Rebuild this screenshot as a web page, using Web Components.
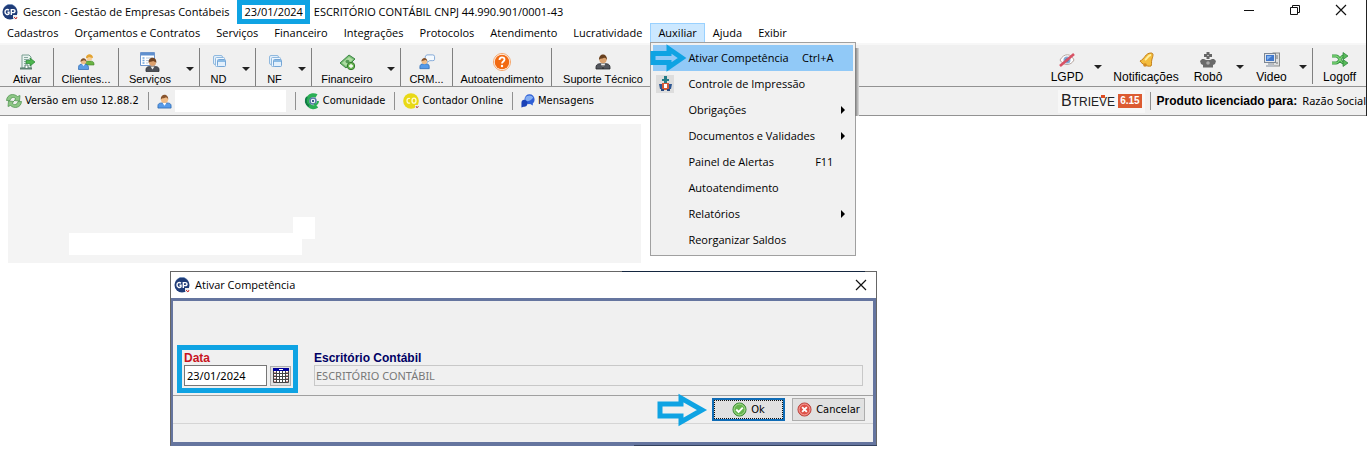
<!DOCTYPE html>
<html lang="pt-BR">
<head>
<meta charset="utf-8">
<title>Gescon - Gestão de Empresas Contábeis</title>
<style>
  body {
    margin: 0;
    background: #fff;
    color: #000;
    font: 11px/16px "Open Sans", "Noto Sans", sans-serif;
    overflow: hidden;
    --small: 11px/16px "DejaVu Sans Condensed", "DejaVu Sans", sans-serif;
  }
</style>
</head>
<body>
<gescon-app></gescon-app>

<script>
const ICONS = {
  logo: `<circle cx="8" cy="8" r="7.5" fill="#1f3c78"/><path d="M1 5A7.500 7.500 0 0 1 15 5L13 2 8 .5 3 2Z" fill="#3564a8"/>
    <path d="M7 6.200C5.500 4.800 3 5.600 3 8s2.700 3.200 4 1.800V8.300H5.500M9.300 11V5.600h2c2.300 0 2.300 3 0 3h-2" fill="none" stroke="#fff" stroke-width="1.400"/>
    <path d="M11 11h4v3l-2 2-2-2z" fill="#eee"/><path d="M12 13l2 2 1-2" fill="none" stroke="#c33"/>`,
  ativar: `<path d="M3 1h7l2 2v11H3z" fill="#e9f3ef" stroke="#7ba093"/><path d="M5 3.500h4M5 5.500h5M5 7.500h2M5 9.500h2" stroke="#8aa9a0"/><path d="M1 14.500h12" stroke="#5d8172" stroke-width="2"/><path d="M6 14v-3h3v3" fill="#fff" stroke="#5d8172"/><path d="M7 6.500h4V4l5 4-5 4V9.500H7z" fill="#4eb650" stroke="#268332" stroke-width=".7"/>`,
  clientes: `<path d="M7 10c0-3 2-3 4-3s5 0 5 3v1H7z" fill="#6ab344" stroke="#3f8426" stroke-width=".6"/><circle cx="11.300" cy="3.700" r="3" fill="#f6cf98"/><path d="M8 4c0-5 7-5 7 0-2 0-3-1-4-1-1 1-2 1-3 1z" fill="#e3a331"/><path d="M.5 15.500v-2c0-3 2-3.500 5-3.500s5 1 5 3.500v2z" fill="#5b9ce5" stroke="#2865af" stroke-width=".7"/><path d="M4 10l1.500 2L7 10" fill="#fff"/><circle cx="5.500" cy="7.500" r="2.700" fill="#efbd8a"/><path d="M2.500 8c0-5 6-5 6 0-1-1-2-2-3-1.500-1 .5-2 .5-3 1.500z" fill="#80532c"/>`,
  pessoa: `<path d="M1 15v-2.500C1 9.500 4 9.500 8 9.500s7 0 7 3V15z" fill="#589be9" stroke="#2865af" stroke-width=".8"/><path d="M6 9.500l2 3 2-3" fill="#fff"/><circle cx="8" cy="5.800" r="3.800" fill="#f1bd88"/><path d="M4 6c-.5-7 8.500-7 8 0-1-2-2-2.500-3.500-2C7 5 5 4 4 6z" fill="#87532c"/>`,
  servicos: `<path d="M.5.500h14v13H.5z" fill="#fff" stroke="#6d95cc"/><path d="M1 1h13v2.500H1z" fill="#5e8fce"/><path d="M2.500 6h2M2.500 8.500h2M2.500 11h2" stroke="#74a8dc" stroke-width="1.500"/><path d="M6 6h7M6 8.500h4M6 11h2" stroke="#b5c6da"/><path d="M6 19.500c-.5-5 1.500-5 6.500-5s7 0 6.500 5z" fill="#4c5058" stroke="#25272b" stroke-width=".7"/><path d="M10.500 14.500l2 3 2-3" fill="#eee"/><circle cx="12.500" cy="10.500" r="3.500" fill="#dca16e"/><path d="M8.700 11c-1-7 8.600-7 7.600 0-1-2-2-1-3-2-2 1-3.600 0-4.600 2z" fill="#704321"/>`,
  notas: `<rect x="2.500" y="1.500" width="9" height="9" rx="1.500" fill="#e3effa" stroke="#90b9df"/><rect x="4.500" y="3.500" width="9" height="9" rx="1" fill="#eef7ff" stroke="#90b9df"/><rect x="6.500" y="5.500" width="8" height="7" rx="1" fill="#e3f0fc" stroke="#75a6d6"/><path d="M7 7h7" stroke="#8bbbe5" stroke-width="2"/>`,
  dinheiro: `<path d="M1 9l9-8 6 4-9 9z" fill="#78bf73" stroke="#3e8647"/><path d="M3 9l7-6 4 2.500L7 12z" fill="#aedca3"/><ellipse cx="8.500" cy="7.500" rx="2" ry="1.700" fill="#569b55"/><circle cx="12" cy="12" r="3.700" fill="#70bb58" stroke="#32772c"/><path d="M12 10v4M10 12h4" stroke="#fff" stroke-width="1.300"/>`,
  crm: `<path d="M8 1.500Q8 .5 9 .5h6.500q2 0 2 2v3q0 1.500-2 1.500H12L9 9V7q-2 0-2-2V3q0-1.500 1-1.500z" fill="#f4faff" stroke="#7aa3d4"/><path d="M1 16v-2c0-3 2-3.500 5-3.500s5.500 0 5.500 3.500v2z" fill="#589be9" stroke="#2865af" stroke-width=".8"/><circle cx="6" cy="8" r="3" fill="#f1bd88"/><path d="M2.700 8c0-5.500 7-5.500 6.600 0-1-1.500-1.500-2-3-1.500-1.300.5-2.600.5-3.600 1.500z" fill="#87532c"/>`,
  ajuda: `<circle cx="9" cy="9" r="8.500" fill="#fff" stroke="#f5a468"/><circle cx="9" cy="9" r="7.300" fill="#f26a12"/><path d="M6.500 7c0-3.500 5-3.500 5-.5 0 2-2.500 2-2.500 4" fill="none" stroke="#fff" stroke-width="1.800"/><circle cx="9" cy="13" r="1.200" fill="#fff"/>`,
  suporte: `<path d="M1 15c-.5-5 2-5.500 7-5.500s7.500.5 7 5.500z" fill="#53565d" stroke="#26282c" stroke-width=".8"/><path d="M5.500 9.500l2.500 4 2.500-4" fill="#eee"/><path d="M8 11v4" stroke="#222"/><circle cx="8" cy="5.500" r="3.700" fill="#dba370"/><path d="M4 6c-.5-7.500 8.500-7.500 8 0-1-2-2-2.500-3.500-2C7 5 5 4 4 6z" fill="#68401f"/>`,
  lgpd: `<path d="M1 8c4-7 11-7 14 0-3 6-11 6-14 0z" fill="#fff" stroke="#b6a6a0"/><circle cx="8" cy="8" r="3.500" fill="#83a9d4"/><circle cx="8" cy="8" r="1.600" fill="#334e76"/><path d="M1 14L15 2" stroke="#d85265" stroke-width="2.600"/>`,
  sino: `<path d="M2 9C7 7 7 1 13 1c3 0 2 3 1 6-1 3 0 6-1 7C9 15 4 12 2 9z" fill="#f4bd3d" stroke="#c4801b"/><path d="M7 8c3-2 3-5 6-5" fill="none" stroke="#fff0a0" stroke-width="2"/><circle cx="7" cy="13" r="1.800" fill="#d18a22"/>`,
  robo: `<path d="M6.500 0h3v2h2.500v3H9.500v2h-3V5H4V2h2.500z" fill="#666"/><path d="M7 3.500h2" stroke="#bbb"/><path d="M0 9l2-2h2l2 1h4l2-1h2l2 2-1 3-2 1v2.500H3V13l-2-1z" fill="#6a6a6a"/><circle cx="8" cy="11" r="1.800" fill="#aaa"/>`,
  video: `<rect x="9" y="1" width="6.500" height="13" fill="#dfe0e0" stroke="#898b8b"/><path d="M11 4h3M11 6h3M12 11h2" stroke="#777"/><rect x=".5" y="1.500" width="11" height="9" fill="#e3e6ea" stroke="#7c8794"/><path d="M2 3h8v6H2z" fill="#4078cd"/><path d="M3 4h5L3 8z" fill="#83b3f0"/><path d="M4 11h4v2h2v2H2v-2h2z" fill="#b8bec6"/>`,
  logoff: `<path d="M0 4h4c4 0 4 7 8 7M0 11h4c4 0 4-7 8-7" fill="none" stroke="#329440" stroke-width="3"/><path d="M0 4h4c4 0 4 7 8 7M0 11h4c4 0 4-7 8-7" fill="none" stroke="#7ed476" stroke-width="1.300"/><path d="M11 .5l5 3.500-5 3.500zM11 7.500l5 3.500-5 3.500z" fill="#58b95a" stroke="#258233" stroke-width=".7"/>`,
  atualizar: `<path d="M.5 7.500C1 1 8 0 11.500 3.500L14 2.500 13.500 8 8 7.500 10 6C8 3.500 5 4 4 7.500z" fill="#8cc684" stroke="#4b8f4b" stroke-width=".7"/><path d="M15.500 8.500C15 15 8 16 4.500 12.500L2 13.500 2.500 8 8 8.500 6 10c2 2.500 5 2 6-1.500z" fill="#8cc684" stroke="#4b8f4b" stroke-width=".7"/>`,
  comunidade: `<path d="M12.500 3A6 6 0 1 0 13 13" fill="none" stroke="#2aaf55" stroke-width="4"/><path d="M3 4A6 6 0 0 0 5 13" fill="none" stroke="#127b47" stroke-width="2"/><circle cx="9" cy="8" r="3" fill="#fff" stroke="#5778a8" stroke-width="1.500"/><path d="M10 11c2 1 4 0 4-3" fill="none" stroke="#2aaf55" stroke-width="2"/><circle cx="9" cy="8" r="1.200" fill="#385889"/>`,
  contador: `<circle cx="8" cy="8" r="7.800" fill="#e9d916"/><path d="M7 5.500c-4-1.500-4 6 0 4.500" fill="none" stroke="#fffbd0" stroke-width="1.300"/><ellipse cx="11" cy="7.700" rx="2" ry="2.500" fill="none" stroke="#fffbd0" stroke-width="1.300"/><path d="M12 12h4v3l-2 1-2-1z" fill="#eee"/><path d="M13 13l1 2 1.500-2" fill="none" stroke="#b55"/>`,
  mensagens: `<path d="M4 6a5.500 5.500 0 0 1 11.500 0c0 3-1 4-2 4.500V13l-3-1.500C6 12 4 10 4 6z" fill="#2f5fd6"/><path d="M5 4a5.500 5.500 0 0 1 9 0c-2 3-6 5-9 4z" fill="#84aef2"/><path d="M.5 10c0-5 6.500-4 7 0 0 4-3 5-4.500 4.500L.5 15.500z" fill="#1a42b7"/>`,
  impressao: `<path d="M0 0h18v18H0z" fill="#ddd"/><path d="M8 1h3v3h2v2h-2v2H8V6H6V4h2z" fill="#247b86"/><path d="M3 9h3v5H4zM13 9h3l-1 5h-2z" fill="#2d5792"/><path d="M6 8h7v7H6z" fill="#d35a38"/><path d="M8 9h3v4H8z" fill="#fff"/><path d="M5 14h3v2H5zM11 14h3v2h-3z" fill="#274a80"/>`,
  ok: `<circle cx="8" cy="8" r="7" fill="#65b54d" stroke="#3a8733"/><circle cx="8" cy="8" r="5.800" fill="none" stroke="#a8dc94"/><path d="M4.500 8l2.500 2.500L11.500 6" fill="none" stroke="#fff" stroke-width="2"/>`,
  cancelar: `<circle cx="8" cy="8" r="7" fill="#de5148" stroke="#b8423c"/><circle cx="8" cy="8" r="5.800" fill="none" stroke="#f5aaa5"/><path d="M5.500 5.500l5 5M10.500 5.500l-5 5" stroke="#fff" stroke-width="2"/>`,
  calendario: `<path d="M0 0h16v15H0z" fill="#fff"/><path d="M0 0h16v3H0z" fill="#000098"/><path d="M6 1.500h4" stroke="#fff"/><path d="M.5 3v11.500h15V3M0 5.500h16M0 8.500h16M0 11.500h16M3.500 3v12M6.500 3v12M9.500 3v12M12.500 3v12" fill="none" stroke="#444"/><path d="M2 4v10M14 4v10" stroke="#a33" stroke-dasharray="1 2"/>`,
  seta: `<path d="M3 10H24V4L45 16 24 28V22H3z" fill="none" stroke="#0fa3e3" stroke-width="5"/>`,
  setaMenu: `<path d="M3 8.500H19V4L32 13 19 22V17.500H3z" fill="none" stroke="#0fa3e3" stroke-width="5"/>`,
  minimizar: `<path d="M0 5.500h10" stroke="#111"/>`,
  restaurar: `<path d="M.5 2.500h7v7h-7zM2.500 2V.5h7v7H8" fill="none" stroke="#111"/>`,
  fechar: `<path d="M0 0l10 10M10 0L0 10" stroke="#111" stroke-width="1.200"/>`
};

class BaseElement extends HTMLElement {
  constructor() {
    super();
    this.attachShadow({ mode: 'open' });
  }

  connectedCallback() {
    this.shadowRoot.innerHTML = this.renderTemplate();
  }
}

// <ui-icon name="..." w h box="viewBox">
class UiIcon extends BaseElement {
  renderTemplate() {
    const w = this.getAttribute('w') || 16;
    const h = this.getAttribute('h') || w;
    const box = this.getAttribute('box') || '0 0 16 16';
    return `
    <style>
      :host { display: inline-flex; flex: none; }
      svg { display: block; overflow: visible; }
    </style>
    <svg width="${w}" height="${h}" viewBox="${box}" aria-hidden="true">${ICONS[this.getAttribute('name')]}</svg>
    `
  }
}

class TitleBar extends BaseElement {
  renderTemplate() {
    return `
    <style>
      :host {
        display: flex;
        align-items: center;
        height: 23px;
        padding-left: 2px;
        background: #fff;
      }
      .text { display: flex; align-items: center; gap: 4px; flex: 1; margin-left: 5px; white-space: nowrap; }
      .date {
        box-sizing: border-box;
        height: 24px;
        margin-left: 4px;
        padding: 0 2px;
        border: 5px solid #0fa3e3;
        line-height: 14px;
      }
      .buttons { display: flex; align-self: flex-start; padding-right: 2px; }
      button {
        display: flex;
        align-items: center;
        justify-content: center;
        width: 46px;
        height: 20px;
        padding: 0;
        border: 0;
        background: none;
      }
    </style>
    <ui-icon name="logo"></ui-icon>
    <div class="text">
      <span>Gescon - Gestão de Empresas Contábeis</span>
      <span class="date">23/01/2024</span>
      <span>ESCRITÓRIO CONTÁBIL CNPJ 44.990.901/0001-43</span>
    </div>
    <div class="buttons">
      <button aria-label="Minimizar"><ui-icon name="minimizar" w="10" box="0 0 10 10"></ui-icon></button>
      <button aria-label="Restaurar"><ui-icon name="restaurar" w="10" box="0 0 10 10"></ui-icon></button>
      <button aria-label="Fechar"><ui-icon name="fechar" w="10" box="0 0 10 10"></ui-icon></button>
    </div>
    `
  }
}

class MenuBar extends BaseElement {
  renderTemplate() {
    return `
    <style>
      :host { display: flex; height: 20px; margin-left: -1px; background: #fff; }
    </style>
    <slot></slot>
    `
  }
}

class MenuItem extends BaseElement {
  renderTemplate() {
    return `
    <style>
      :host { display: block; position: relative; }
      button {
        display: block;
        box-sizing: border-box;
        height: 20px;
        padding: 0 7px;
        border: 1px solid transparent;
        background: none;
        color: inherit;
        font: inherit;
        white-space: nowrap;
      }
      :host([open]) button { background: #cce8ff; border-color: #99d1ff; }
      ::slotted(menu-popup) { position: absolute; top: 19px; left: 0; z-index: 10; }
    </style>
    <button>${this.getAttribute('label')}</button>
    <slot></slot>
    `
  }
}

class MenuPopup extends BaseElement {
  renderTemplate() {
    return `
    <style>
      :host {
        display: block;
        box-sizing: border-box;
        width: 206px;
        padding: 2px;
        border: 1px solid #a0a0a0;
        background: #f1f1f1;
      }
      /* the shadow falls on the bars only */
      .shadow {
        position: absolute;
        left: 100%;
        top: 5px;
        width: 4px;
        height: 68px;
        background: linear-gradient(to right, #777, #ddd);
      }
    </style>
    <slot></slot>
    <div class="shadow"></div>
    `
  }
}

class MenuRow extends BaseElement {
  renderTemplate() {
    const icon = this.getAttribute('icon');
    const key = this.getAttribute('key') || '';
    return `
    <style>
      :host { display: block; position: relative; }
      button {
        display: flex;
        align-items: center;
        width: 100%;
        height: 26px;
        padding: 0 8px 0 3px;
        border: 0;
        background: none;
        color: inherit;
        font: inherit;
        text-align: left;
        white-space: nowrap;
      }
      :host([active]) button { background: #91c9f7; }
      .icon { width: 32px; display: flex; }
      .label { flex: 1; }
      .more { width: 12px; display: flex; justify-content: flex-end; }
      :host([more]) .more::after {
        content: "";
        border: 4px solid transparent;
        border-left-color: #000;
        border-right: 0;
      }
      .arrow { position: absolute; left: -3px; top: 0; }
    </style>
    <button>
      <span class="icon">${icon ? `<ui-icon name="${icon}" w="18" box="0 0 18 18"></ui-icon>` : ''}</span>
      <span class="label"><slot></slot></span>
      <span>${key}</span>
      <span class="more"></span>
    </button>
    ${this.hasAttribute('active') ? '<ui-icon class="arrow" name="setaMenu" w="38" h="26" box="0 0 38 26"></ui-icon>' : ''}
    `
  }
}

class ToolBar extends BaseElement {
  renderTemplate() {
    return `
    <style>
      :host {
        display: flex;
        box-sizing: border-box;
        height: 44px;
        padding: 3px 0 0 1px;
        border-top: 2px solid #f7f7f7;
        border-bottom: 1px solid #929292;
        background: #f0f0f0;
        font: 11px/14px "Liberation Sans", Arial, sans-serif;
      }
      .right { display: flex; margin-left: auto; padding-bottom: 2px; font-size: 12px; }
    </style>
    <slot></slot>
    <div class="right"><slot name="right"></slot></div>
    `
  }
}

class ToolButton extends BaseElement {
  renderTemplate() {
    return `
    <style>
      :host {
        display: flex;
        box-sizing: border-box;
        width: var(--w);
      }
      :host([line]) { border-right: 1px solid #808080; }
      button {
        display: flex;
        flex-direction: column;
        align-items: center;
        justify-content: flex-end;
        flex: 1;
        min-width: 0;
        gap: 1px;
        padding: 0;
        border: 0;
        background: none;
        color: inherit;
        font: inherit;
        white-space: nowrap;
      }
      .icon { display: flex; align-items: center; height: 18px; }
      .drop { flex: none; width: 18px; padding-bottom: 15px; }
      .drop::after {
        content: "";
        border: 4px solid transparent;
        border-top-color: #222;
        border-bottom: 0;
      }
    </style>
    <button>
      <span class="icon"><ui-icon name="${this.getAttribute('icon')}" w="${this.getAttribute('size') || 16}" box="${this.getAttribute('box') || '0 0 16 16'}"></ui-icon></span>
      <span><slot></slot></span>
    </button>
    ${this.hasAttribute('drop') ? '<button class="drop" aria-label="Mais opções"></button>' : ''}
    `
  }
}

class StatusBar extends BaseElement {
  renderTemplate() {
    return `
    <style>
      :host {
        display: flex;
        align-items: center;
        box-sizing: border-box;
        height: 29px;
        padding-left: 6px;
        border-bottom: 1px solid #929292;
        background: #f0f0f0;
        font: var(--small);
        white-space: nowrap;
      }
      .item {
        display: flex;
        align-items: center;
        box-sizing: border-box;
        height: 18px;
        gap: 3px;
        margin-right: 8px;
        padding-right: 9px;
        border-right: 1px solid #909090;
      }
      .item.last { border: 0; }
      .blank { width: 111px; height: 22px; background: #fff; }
      .right {
        display: flex;
        align-items: center;
        margin-left: auto;
        gap: 5px;
        font: 11px/16px "Noto Sans", sans-serif;
      }
      .btrieve {
        display: flex;
        align-items: center;
        gap: 3px;
        padding: 0 3px;
        background: #f7f7f7;
        font: 16px/22px "Liberation Sans", Arial, sans-serif;
        color: #222;
      }
      .btrieve small { font-size: 12px; }
      .btrieve .v { background: linear-gradient(#df4d23, #df4d23) center top / 4px 3px no-repeat; }
      .btrieve b {
        padding: 0 2px;
        background: #dc5b32;
        color: #fff;
        font: bold 10px/14px "Liberation Sans", Arial, sans-serif;
      }
      .produto {
        padding-left: 6px;
        border-left: 1px solid #909090;
        font: bold 12px/18px "Liberation Sans", Arial, sans-serif;
      }
    </style>
    <div class="item"><ui-icon name="atualizar"></ui-icon>Versão em uso 12.88.2</div>
    <div class="item"><ui-icon name="pessoa" w="15"></ui-icon><span class="blank"></span></div>
    <div class="item"><ui-icon name="comunidade"></ui-icon>Comunidade</div>
    <div class="item"><ui-icon name="contador"></ui-icon>Contador Online</div>
    <div class="item last"><ui-icon name="mensagens" w="14"></ui-icon>Mensagens</div>
    <div class="right">
      <span class="btrieve"><span>B<small>TRIE<span class="v">V</span>E</small></span><b>6.15</b></span>
      <span class="produto">Produto licenciado para:</span>
      <span>Razão Social</span>
    </div>
    `
  }
}

class WorkArea extends BaseElement {
  renderTemplate() {
    return `
    <style>
      :host { display: block; padding: 8px; }
      .panel {
        display: flex;
        flex-direction: column;
        justify-content: flex-end;
        box-sizing: border-box;
        width: 46%;
        min-width: 633px;
        height: 139px;
        padding: 0 0 8px 61px;
        background: #f4f4f4;
      }
      .small { width: 22px; height: 22px; margin: 0 0 -6px 224px; background: #fff; }
      .wide { width: 233px; height: 22px; background: #fff; }
    </style>
    <div class="panel">
      <div class="small"></div>
      <div class="wide"></div>
    </div>
    <slot></slot>
    `
  }
}

class DialogWindow extends BaseElement {
  renderTemplate() {
    return `
    <style>
      :host {
        display: block;
        position: relative;
        box-sizing: border-box;
        width: 707px;
        margin: 8px 0 0 162px;
        border: 1px solid #666;
        border-bottom-color: #65759f;
        background: #fff;
      }
      .edge { position: absolute; top: -1px; right: 11px; width: 243px; height: 1px; background: #14263f; }
      .edge.bottom { top: auto; bottom: -1px; right: -1px; background: #33415f; }
      header { display: flex; align-items: center; height: 26px; padding: 0 10px 0 3px; gap: 5px; }
      header span { flex: 1; }
      header button { display: flex; padding: 0; border: 0; background: none; }
      form { border: 3px solid #65759f; border-left-width: 2px; background: #f0f0f0; }
      .fields {
        display: flex;
        align-items: flex-end;
        gap: 16px;
        box-sizing: border-box;
        height: 95px;
        padding: 0 10px 2px 4px;
        border-bottom: 1px solid #a0a0a0;
      }
      .data { box-sizing: border-box; width: 121px; height: 48px; padding: 1px 2px; border: 5px solid #0fa3e3; }
      .escritorio { flex: 1; padding-bottom: 7px; }
      label { display: block; font: bold 12px/14px "Liberation Sans", Arial, sans-serif; color: #000064; }
      .data label { color: #c8141e; }
      .row { display: flex; align-items: center; gap: 3px; }
      input {
        box-sizing: border-box;
        height: 21px;
        padding: 0 2px;
        border: 1px solid #777;
        background: #fff;
        color: #000;
        font: 11px "Noto Sans", sans-serif;
      }
      #data { width: 83px; }
      #escritorio { width: 100%; padding: 0 1px; border-color: #c8c8c8; background: #f0f0f0; color: #787878; }
      .row button {
        display: flex;
        align-items: center;
        justify-content: center;
        width: 21px;
        height: 20px;
        padding: 0;
        border: 1px solid #adadad;
        background: #e1e1e1;
      }
      .actions {
        display: flex;
        align-items: center;
        justify-content: flex-end;
        gap: 7px;
        height: 27px;
        padding-right: 8px;
        border-bottom: 1px solid #d5d5d5;
      }
      .actions > ui-icon { margin-right: -2px; }
      .actions button {
        display: flex;
        align-items: center;
        justify-content: center;
        gap: 4px;
        box-sizing: border-box;
        width: 73px;
        height: 23px;
        padding: 0;
        border: 1px solid #adadad;
        background: #e1e1e1;
        color: #000;
        font: var(--small);
      }
      .actions .ok { border: 2px solid #0f6cb6; outline: 1px dotted #111; outline-offset: -3px; }
      .foot { height: 18px; }
    </style>
    <header>
      <ui-icon name="logo"></ui-icon>
      <span>Ativar Competência</span>
      <button aria-label="Fechar"><ui-icon name="fechar" w="10" box="0 0 10 10"></ui-icon></button>
    </header>
    <form>
      <div class="fields">
        <div class="data">
          <label for="data">Data</label>
          <div class="row">
            <input id="data" type="text" value="23/01/2024">
            <button type="button" aria-label="Abrir calendário"><ui-icon name="calendario"></ui-icon></button>
          </div>
        </div>
        <div class="escritorio">
          <label for="escritorio">Escritório Contábil</label>
          <input id="escritorio" type="text" value="ESCRITÓRIO CONTÁBIL" disabled>
        </div>
      </div>
      <div class="actions">
        <ui-icon name="seta" w="50" h="32" box="0 0 50 32"></ui-icon>
        <button type="button" class="ok"><ui-icon name="ok" w="15"></ui-icon>Ok</button>
        <button type="button"><ui-icon name="cancelar" w="15"></ui-icon>Cancelar</button>
      </div>
      <div class="foot"></div>
    </form>
    <div class="edge"></div>
    <div class="edge bottom"></div>
    `
  }
}

class GesconApp extends BaseElement {
  renderTemplate() {
    return `
    <style>
      :host { display: block; }
      .window { margin-right: 4px; border-right: 1px solid #222; }
      title-bar { position: relative; z-index: 1; }
    </style>
    <div class="window">
      <title-bar></title-bar>
      <menu-bar>
        <menu-item label="Cadastros"></menu-item>
        <menu-item label="Orçamentos e Contratos"></menu-item>
        <menu-item label="Serviços"></menu-item>
        <menu-item label="Financeiro"></menu-item>
        <menu-item label="Integrações"></menu-item>
        <menu-item label="Protocolos"></menu-item>
        <menu-item label="Atendimento"></menu-item>
        <menu-item label="Lucratividade"></menu-item>
        <menu-item label="Auxiliar" open>
          <menu-popup>
            <menu-row active key="Ctrl+A">Ativar Competência</menu-row>
            <menu-row icon="impressao">Controle de Impressão</menu-row>
            <menu-row more>Obrigações</menu-row>
            <menu-row more>Documentos e Validades</menu-row>
            <menu-row key="F11">Painel de Alertas</menu-row>
            <menu-row>Autoatendimento</menu-row>
            <menu-row more>Relatórios</menu-row>
            <menu-row>Reorganizar Saldos</menu-row>
          </menu-popup>
        </menu-item>
        <menu-item label="Ajuda"></menu-item>
        <menu-item label="Exibir"></menu-item>
      </menu-bar>
      <tool-bar>
        <tool-button line icon="ativar" style="--w: 53px">Ativar</tool-button>
        <tool-button line icon="clientes" style="--w: 65px">Clientes...</tool-button>
        <tool-button line drop icon="servicos" size="20" box="0 0 20 20" style="--w: 81px">Serviços</tool-button>
        <tool-button line drop icon="notas" style="--w: 56px">ND</tool-button>
        <tool-button line drop icon="notas" style="--w: 56px">NF</tool-button>
        <tool-button line drop icon="dinheiro" style="--w: 89px">Financeiro</tool-button>
        <tool-button line icon="crm" box="0 0 18 17" style="--w: 52px">CRM...</tool-button>
        <tool-button line icon="ajuda" size="18" box="0 0 18 18" style="--w: 99px">Autoatendimento</tool-button>
        <tool-button icon="suporte" style="--w: 102px">Suporte Técnico</tool-button>
        <tool-button slot="right" drop icon="lgpd" style="--w: 62px">LGPD</tool-button>
        <tool-button slot="right" icon="sino" style="--w: 78px">Notificações</tool-button>
        <tool-button slot="right" drop icon="robo" style="--w: 64px">Robô</tool-button>
        <tool-button slot="right" drop line icon="video" style="--w: 64px">Video</tool-button>
        <tool-button slot="right" icon="logoff" style="--w: 53px">Logoff</tool-button>
      </tool-bar>
      <status-bar></status-bar>
    </div>
    <work-area><dialog-window></dialog-window></work-area>
    `
  }
}

customElements.define('ui-icon', UiIcon);
customElements.define('title-bar', TitleBar);
customElements.define('menu-bar', MenuBar);
customElements.define('menu-item', MenuItem);
customElements.define('menu-popup', MenuPopup);
customElements.define('menu-row', MenuRow);
customElements.define('tool-bar', ToolBar);
customElements.define('tool-button', ToolButton);
customElements.define('status-bar', StatusBar);
customElements.define('work-area', WorkArea);
customElements.define('dialog-window', DialogWindow);
customElements.define('gescon-app', GesconApp);
</script>
</body>
</html>
